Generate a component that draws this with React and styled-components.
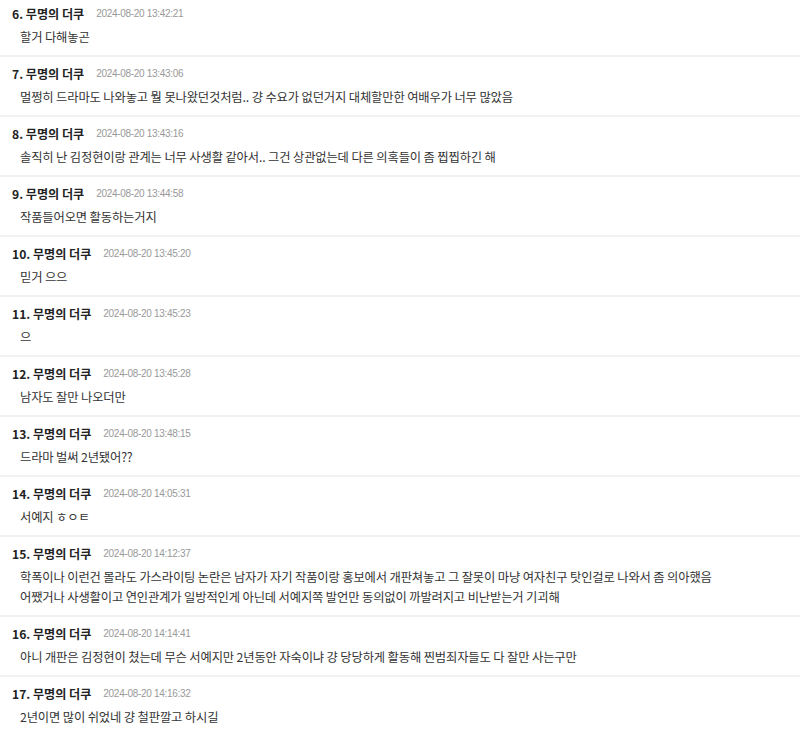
import styled, { createGlobalStyle } from "styled-components";

const GlobalStyle = createGlobalStyle`
  body {
    margin: 0;
    background: #fff;
    font-family: "Noto Sans CJK KR", "Noto Sans", sans-serif;
  }
`;

const List = styled.div`
  display: flex;
  flex-direction: column;
  margin-top: -3px;
`;

const Row = styled.div`
  display: flex;
  flex-direction: column;
  gap: 4px;
  padding: 6px 12px 8px;
  border-bottom: 2px solid #f2f2f2;
`;

const Head = styled.div`
  display: flex;
  align-items: center;
  gap: 12px;
  height: 20px;
`;

const Name = styled.span`
  font-size: 12.1px;
  font-weight: bold;
  color: #222;
`;

const Time = styled.span`
  font-family: "Liberation Sans", Arial, sans-serif;
  font-size: 10px;
  color: #999;
  letter-spacing: -0.3px;
`;

const Body = styled.div`
  padding-left: 8px;
  font-size: 12.3px;
  line-height: 20px;
  color: #333;
  letter-spacing: -0.15px;
`;

const comments = [
  { n: 6, t: "2024-08-20 13:42:21", lines: ["할거 다해놓곤"] },
  { n: 7, t: "2024-08-20 13:43:06", lines: ["멀쩡히 드라마도 나와놓고 뭘 못나왔던것처럼.. 걍 수요가 없던거지 대체할만한 여배우가 너무 많았음"] },
  { n: 8, t: "2024-08-20 13:43:16", lines: ["솔직히 난 김정현이랑 관계는 너무 사생활 같아서.. 그건 상관없는데 다른 의혹들이 좀 찝찝하긴 해"] },
  { n: 9, t: "2024-08-20 13:44:58", lines: ["작품들어오면 활동하는거지"] },
  { n: 10, t: "2024-08-20 13:45:20", lines: ["믿거 으으"] },
  { n: 11, t: "2024-08-20 13:45:23", lines: ["으"] },
  { n: 12, t: "2024-08-20 13:45:28", lines: ["남자도 잘만 나오더만"] },
  { n: 13, t: "2024-08-20 13:48:15", lines: ["드라마 벌써 2년됐어??"] },
  { n: 14, t: "2024-08-20 14:05:31", lines: ["서예지 ㅎㅇㅌ"] },
  {
    n: 15,
    t: "2024-08-20 14:12:37",
    lines: [
      "학폭이나 이런건 몰라도 가스라이팅 논란은 남자가 자기 작품이랑 홍보에서 개판쳐놓고 그 잘못이 마냥 여자친구 탓인걸로 나와서 좀 의아했음",
      "어쨌거나 사생활이고 연인관계가 일방적인게 아닌데 서예지쪽 발언만 동의없이 까발려지고 비난받는거 기괴해",
    ],
  },
  { n: 16, t: "2024-08-20 14:14:41", lines: ["아니 개판은 김정현이 쳤는데 무슨 서예지만 2년동안 자숙이냐 걍 당당하게 활동해 찐범죄자들도 다 잘만 사는구만"] },
  { n: 17, t: "2024-08-20 14:16:32", lines: ["2년이면 많이 쉬었네 걍 철판깔고 하시길"] },
];

const App = () => {
  return (
    <>
      <GlobalStyle />
      <List>
        {comments.map((c) => (
          <Row key={c.n}>
            <Head>
              <Name>{c.n}. 무명의 더쿠</Name>
              <Time>{c.t}</Time>
            </Head>
            <Body>
              {c.lines.map((l, i) => (
                <div key={i}>{l}</div>
              ))}
            </Body>
          </Row>
        ))}
      </List>
    </>
  );
};
export default App;
